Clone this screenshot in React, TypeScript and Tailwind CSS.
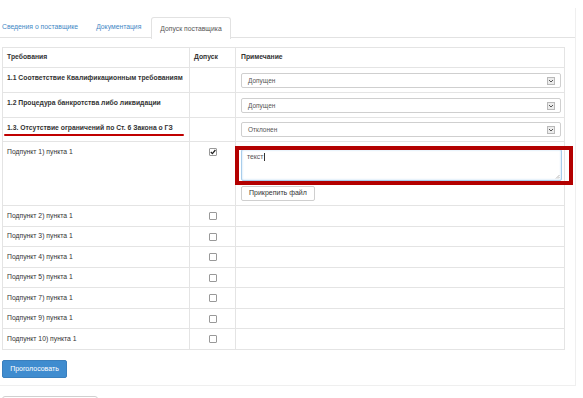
import React from 'react';

const subRows = [
  { label: 'Подпункт 2) пункта 1', h: 'h-[21px]' },
  { label: 'Подпункт 3) пункта 1', h: 'h-[20px]' },
  { label: 'Подпункт 4) пункта 1', h: 'h-[21px]' },
  { label: 'Подпункт 5) пункта 1', h: 'h-[20px]' },
  { label: 'Подпункт 7) пункта 1', h: 'h-[21px]' },
  { label: 'Подпункт 9) пункта 1', h: 'h-[20px]' },
  { label: 'Подпункт 10) пункта 1', h: 'h-[20px]' },
];

const SelectBox: React.FC<{ value: string }> = ({ value }) => (
  <div className="w-[320px] h-[15px] border border-[#cfcfcf] rounded-[2px] bg-white flex items-center justify-between pl-[6px] pr-[5px]">
    <span className="text-[6.5px] text-[#555]">{value}</span>
    <span className="w-[8px] h-[8px] border border-[#b9b9b9] bg-[#ececec] flex items-center justify-center">
      <svg width="6" height="4" viewBox="0 0 6 4">
        <path d="M1 1 L3 3 L5 1" fill="none" stroke="#555" strokeWidth="1" />
      </svg>
    </span>
  </div>
);

const Check: React.FC<{ checked?: boolean }> = ({ checked }) => (
  <span className="w-[8px] h-[8px] border border-[#999] bg-white rounded-[1px] flex items-center justify-center">
    {checked && (
      <svg width="6" height="6" viewBox="0 0 6 6">
        <path d="M0.8 3 L2.4 4.6 L5.4 1" fill="none" stroke="#222" strokeWidth="1.3" />
      </svg>
    )}
  </span>
);

const Row: React.FC<{ h: string; children: React.ReactNode }> = ({ h, children }) => (
  <div className={`${h} grid grid-cols-[187px_46px_1fr] border-b border-[#e4e4e4]`}>{children}</div>
);

const App: React.FC = () => {
  return (
    <div className="w-[583px] h-[398px] overflow-hidden bg-white font-['Liberation_Sans',Arial,sans-serif] text-[#333]">
      <div className="w-[576px] mt-[8px] h-[378px] border-r border-b border-[#efefef] pt-[8px]">
        {/* tabs */}
        <div className="flex h-[22px] border-b border-[#e2e2e2] text-[6.8px] -ml-[6px]">
          <div className="px-[8px] pt-[2px] flex items-center text-[#3f88c5] mr-[2px]">Сведения о поставщике</div>
          <div className="px-[8px] pt-[2px] flex items-center text-[#3f88c5] mr-[2px]">Документация</div>
          <div className="px-[8px] pt-[1px] h-[22px] flex items-center text-[#555] bg-white border border-b-0 border-[#e2e2e2] rounded-t-[3px] relative top-[1px]">
            Допуск поставщика
          </div>
        </div>

        {/* table */}
        <div className="ml-[2px] mt-[9px] w-[563px] border border-[#e4e4e4] text-[6.8px]">
          <Row h="h-[20px]">
            <div className="border-r border-[#e4e4e4] pl-[4px] flex items-center font-bold">Требования</div>
            <div className="border-r border-[#e4e4e4] pl-[4px] flex items-center font-bold">Допуск</div>
            <div className="pl-[5px] flex items-center font-bold">Примечание</div>
          </Row>
          <Row h="h-[25px]">
            <div className="border-r border-[#e4e4e4] pl-[4px] pt-[5px] font-bold leading-[10px]">1.1 Соответствие Квалификационным требованиям</div>
            <div className="border-r border-[#e4e4e4]" />
            <div className="pl-[5px] pt-[5px]"><SelectBox value="Допущен" /></div>
          </Row>
          <Row h="h-[25px]">
            <div className="border-r border-[#e4e4e4] pl-[4px] pt-[5px] font-bold leading-[10px]">1.2 Процедура банкротства либо ликвидации</div>
            <div className="border-r border-[#e4e4e4]" />
            <div className="pl-[5px] pt-[5px]"><SelectBox value="Допущен" /></div>
          </Row>
          <Row h="h-[24px]">
            <div className="relative border-r border-[#e4e4e4] pl-[4px] pt-[5px] font-bold leading-[10px]">
              1.3. Отсутствие ограничений по Ст. 6 Закона о ГЗ
              <span className="absolute left-[1px] top-[16px] w-[180px] h-[2px] rounded-full bg-[#c00000]" />
            </div>
            <div className="border-r border-[#e4e4e4]" />
            <div className="pl-[5px] pt-[4px]"><SelectBox value="Отклонен" /></div>
          </Row>
          <Row h="h-[64px]">
            <div className="border-r border-[#e4e4e4] pl-[4px] pt-[5px] leading-[10px]">Подпункт 1) пункта 1</div>
            <div className="border-r border-[#e4e4e4] flex justify-center pt-[6px]">
              <Check checked />
            </div>
            <div className="relative pl-[5px] pt-[7px]">
              <div className="relative w-[321px] h-[32px] border border-[#a9cdeb] rounded-[2px] shadow-[inset_0_0_2px_rgba(102,175,233,0.5)] px-[5px] pt-[2px] text-[#555] leading-[9px]">
                текст<span className="inline-block w-px h-[8px] bg-[#333] align-middle ml-px" />
                <svg className="absolute right-[1px] bottom-[1px]" width="5" height="5" viewBox="0 0 5 5">
                  <path d="M4.5 1 L1 4.5 M4.5 3 L3 4.5" stroke="#999" strokeWidth="0.7" />
                </svg>
              </div>
              <button className="mt-[5px] h-[15px] px-[7px] bg-white border border-[#cfcfcf] rounded-[2px] text-[7px] text-[#333] flex items-center">
                Прикрепить файл
              </button>
              <span className="absolute -left-[1px] top-[4px] w-[338px] h-[39px] border-[4px] border-[#b30000]" />
            </div>
          </Row>
          {subRows.map((r, i) => (
            <div
              key={r.label}
              className={`${r.h} grid grid-cols-[187px_46px_1fr] ${i < subRows.length - 1 ? 'border-b border-[#e4e4e4]' : ''}`}
            >
              <div className="border-r border-[#e4e4e4] pl-[4px] flex items-center">{r.label}</div>
              <div className="border-r border-[#e4e4e4] flex items-center justify-center">
                <Check />
              </div>
              <div />
            </div>
          ))}
        </div>

        <button className="ml-[2px] mt-[10px] h-[18px] w-[65px] bg-[#3f8ccf] border border-[#3a7fbd] rounded-[2px] text-white text-[7px] flex items-center justify-center">
          Проголосовать
        </button>
      </div>
      <div className="ml-[2px] mt-[10px] w-[96px] h-[20px] border border-[#d0d0d0] rounded-[3px]" />
    </div>
  );
};

export default App;
